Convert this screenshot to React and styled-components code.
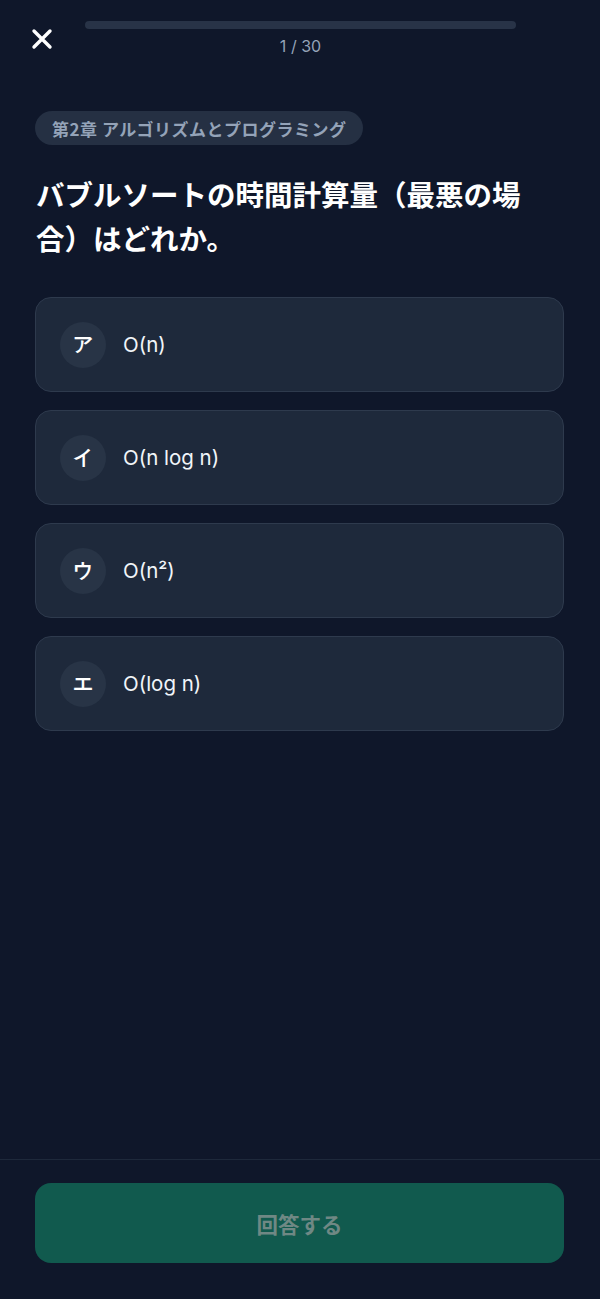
import React, { useState } from 'react'
import styled, { createGlobalStyle } from 'styled-components'

const GlobalStyle = createGlobalStyle`
  html, body {
    margin: 0;
    padding: 0;
    background: #0f172a;
  }
  body {
    font-family: "Noto Sans CJK JP", "Noto Sans", sans-serif;
    color: #f8fafc;
  }
  * { box-sizing: border-box; }
`

const options = [
  { key: 'ア', label: 'O(n)' },
  { key: 'イ', label: 'O(n log n)' },
  { key: 'ウ', label: 'O(n²)' },
  { key: 'エ', label: 'O(log n)' },
]

export default function App() {
  const [selected, setSelected] = useState(null)
  const current = 1
  const total = 30

  return (
    <Screen>
      <GlobalStyle />
      <Header>
        <CloseButton aria-label="閉じる">
          <svg width="22" height="22" viewBox="0 0 22 22" fill="none">
            <path d="M3 3L19 19M19 3L3 19" stroke="#ffffff" strokeWidth="3.4" strokeLinecap="round" />
          </svg>
        </CloseButton>
        <Progress>
          <Track>
            <Fill style={{ width: `${((current - 1) / total) * 100}%` }} />
          </Track>
          <Counter>{current} / {total}</Counter>
        </Progress>
      </Header>

      <Main>
        <Chip>第2章 アルゴリズムとプログラミング</Chip>
        <Question>バブルソートの時間計算量（最悪の場合）はどれか。</Question>
        <OptionList>
          {options.map((o) => (
            <Option
              key={o.key}
              $active={selected === o.key}
              onClick={() => setSelected(o.key)}
            >
              <Badge>{o.key}</Badge>
              <OptionText>{o.label}</OptionText>
            </Option>
          ))}
        </OptionList>
      </Main>

      <Footer>
        <SubmitButton disabled={!selected}>回答する</SubmitButton>
      </Footer>
    </Screen>
  )
}

const Screen = styled.div`
  min-height: 1299px;
  display: flex;
  flex-direction: column;
  background: #0f172a;
`

const Header = styled.header`
  display: grid;
  grid-template-columns: 85px 1fr 84px;
  align-items: start;
  padding-top: 21px;
`

const CloseButton = styled.button`
  background: none;
  border: 0;
  padding: 0;
  width: 85px;
  height: 36px;
  display: flex;
  align-items: center;
  justify-content: center;
  cursor: pointer;
  svg { margin-left: -1px; }
`

const Progress = styled.div`
  display: flex;
  flex-direction: column;
  align-items: center;
  gap: 7px;
`

const Track = styled.div`
  width: 100%;
  height: 8px;
  border-radius: 4px;
  background: #283347;
  overflow: hidden;
`

const Fill = styled.div`
  height: 100%;
  background: #10b981;
`

const Counter = styled.div`
  font-family: "Inter", "Noto Sans", sans-serif;
  font-size: 16px;
  color: #94a3b8;
  line-height: 20px;
`

const Main = styled.main`
  flex: 1;
  padding: 54px 36px 0 35px;
`

const Chip = styled.div`
  display: inline-flex;
  align-items: center;
  height: 34px;
  padding: 0 17px;
  border-radius: 17px;
  background: #253043;
  color: #94a3b8;
  font-size: 17px;
  letter-spacing: 0.5px;
  font-weight: 700;
`

const Question = styled.h1`
  margin: 27px 0 37px 1px;
  padding-right: 22px;
  font-size: 28.5px;
  line-height: 44px;
  font-weight: 700;
  color: #ffffff;
`

const OptionList = styled.div`
  display: flex;
  flex-direction: column;
  gap: 18px;
`

const Option = styled.button`
  display: flex;
  align-items: center;
  gap: 17px;
  height: 95px;
  padding: 0 24px;
  border-radius: 16px;
  border: 1px solid ${(p) => (p.$active ? '#10b981' : '#2e3a4d')};
  background: #1e293b;
  cursor: pointer;
  text-align: left;
`

const Badge = styled.span`
  width: 46px;
  height: 46px;
  border-radius: 50%;
  background: #283446;
  color: #ffffff;
  font-size: 20px;
  font-weight: 700;
  display: flex;
  align-items: center;
  justify-content: center;
  flex-shrink: 0;
`

const OptionText = styled.span`
  font-family: "Inter", "Noto Sans", sans-serif;
  font-size: 20.5px;
  color: #f1f5f9;
`

const Footer = styled.footer`
  border-top: 1px solid #1e293b;
  padding: 23px 36px 36px 35px;
`

const SubmitButton = styled.button`
  width: 100%;
  height: 80px;
  border: 0;
  border-radius: 16px;
  background: #115a4e;
  color: #6f8884;
  font-family: "Noto Sans CJK JP", sans-serif;
  font-size: 21.5px;
  font-weight: 700;
  cursor: pointer;
  &:disabled { cursor: not-allowed; }
`
